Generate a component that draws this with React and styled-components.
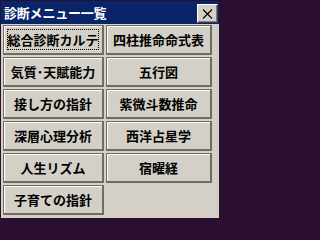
import React from "react";
import styled, { createGlobalStyle } from "styled-components";

const Global = createGlobalStyle`
  html, body { margin: 0; padding: 0; background: #2b0f2e; }
  * { box-sizing: border-box; }
`;

const Window = styled.div`
  width: 222px;
  height: 220px;
  background: #d4d0c8;
  border-left: 1px solid #2b0f2e;
  border-right: 3px solid #2b0f2e;
  border-bottom: 2px solid #2b0f2e;
  border-top: 1px solid #2b0f2e;
  display: flex;
  flex-direction: column;
  font-family: "Noto Sans CJK JP", "Noto Sans", sans-serif;
`;

const TitleBar = styled.div`
  height: 23px;
  background: #0a246a;
  display: flex;
  align-items: center;
  justify-content: space-between;
  padding: 0 1px 0 3px;
`;

const Title = styled.span`
  color: #ffffff;
  font-size: 13px;
  font-weight: 700;
  letter-spacing: -0.2px;
  line-height: 1;
`;

const CloseButton = styled.div`
  width: 21px;
  height: 19px;
  margin-top: 2px;
  background: #d4d0c8;
  border-top: 1px solid #ffffff;
  border-left: 1px solid #ffffff;
  border-right: 1px solid #404040;
  border-bottom: 1px solid #404040;
  box-shadow: inset -1px -1px 0 #808080;
  display: flex;
  align-items: center;
  justify-content: center;
`;

const Grid = styled.div`
  display: grid;
  grid-template-columns: 101px 106px;
  grid-auto-rows: 30px;
  gap: 2px;
  padding: 1px 0 0 2px;
`;

const MenuButton = styled.div`
  position: relative;
  background: #d4d0c8;
  border: 1px solid #6e6e5e;
  border-right-width: 2px;
  border-bottom-width: 2px;
  box-shadow: inset 1px 1px 0 #ffffff;
  display: flex;
  align-items: center;
  justify-content: center;
  font-size: 13px;
  font-weight: 700;
  color: #000000;
  white-space: nowrap;
  letter-spacing: 0;
  &::after {
    content: "";
    display: ${(p) => (p.$focused ? "block" : "none")};
    position: absolute;
    inset: 3px;
    border: 1px dotted #000000;
  }
`;

const items = [
  "総合診断カルテ",
  "四柱推命命式表",
  "気質･天賦能力",
  "五行図",
  "接し方の指針",
  "紫微斗数推命",
  "深層心理分析",
  "西洋占星学",
  "人生リズム",
  "宿曜経",
  "子育ての指針",
];

export default function App() {
  return (
    <>
      <Global />
      <Window>
        <TitleBar>
          <Title>診断メニュー一覧</Title>
          <CloseButton>
            <svg width="11" height="10" viewBox="0 0 11 10">
              <path d="M1 0.5 L10 9.5 M10 0.5 L1 9.5" stroke="#000" strokeWidth="1.1" fill="none" />
            </svg>
          </CloseButton>
        </TitleBar>
        <Grid>
          {items.map((t, i) => (
            <MenuButton key={t} $focused={i === 0}>
              {t}
            </MenuButton>
          ))}
        </Grid>
      </Window>
    </>
  );
}
